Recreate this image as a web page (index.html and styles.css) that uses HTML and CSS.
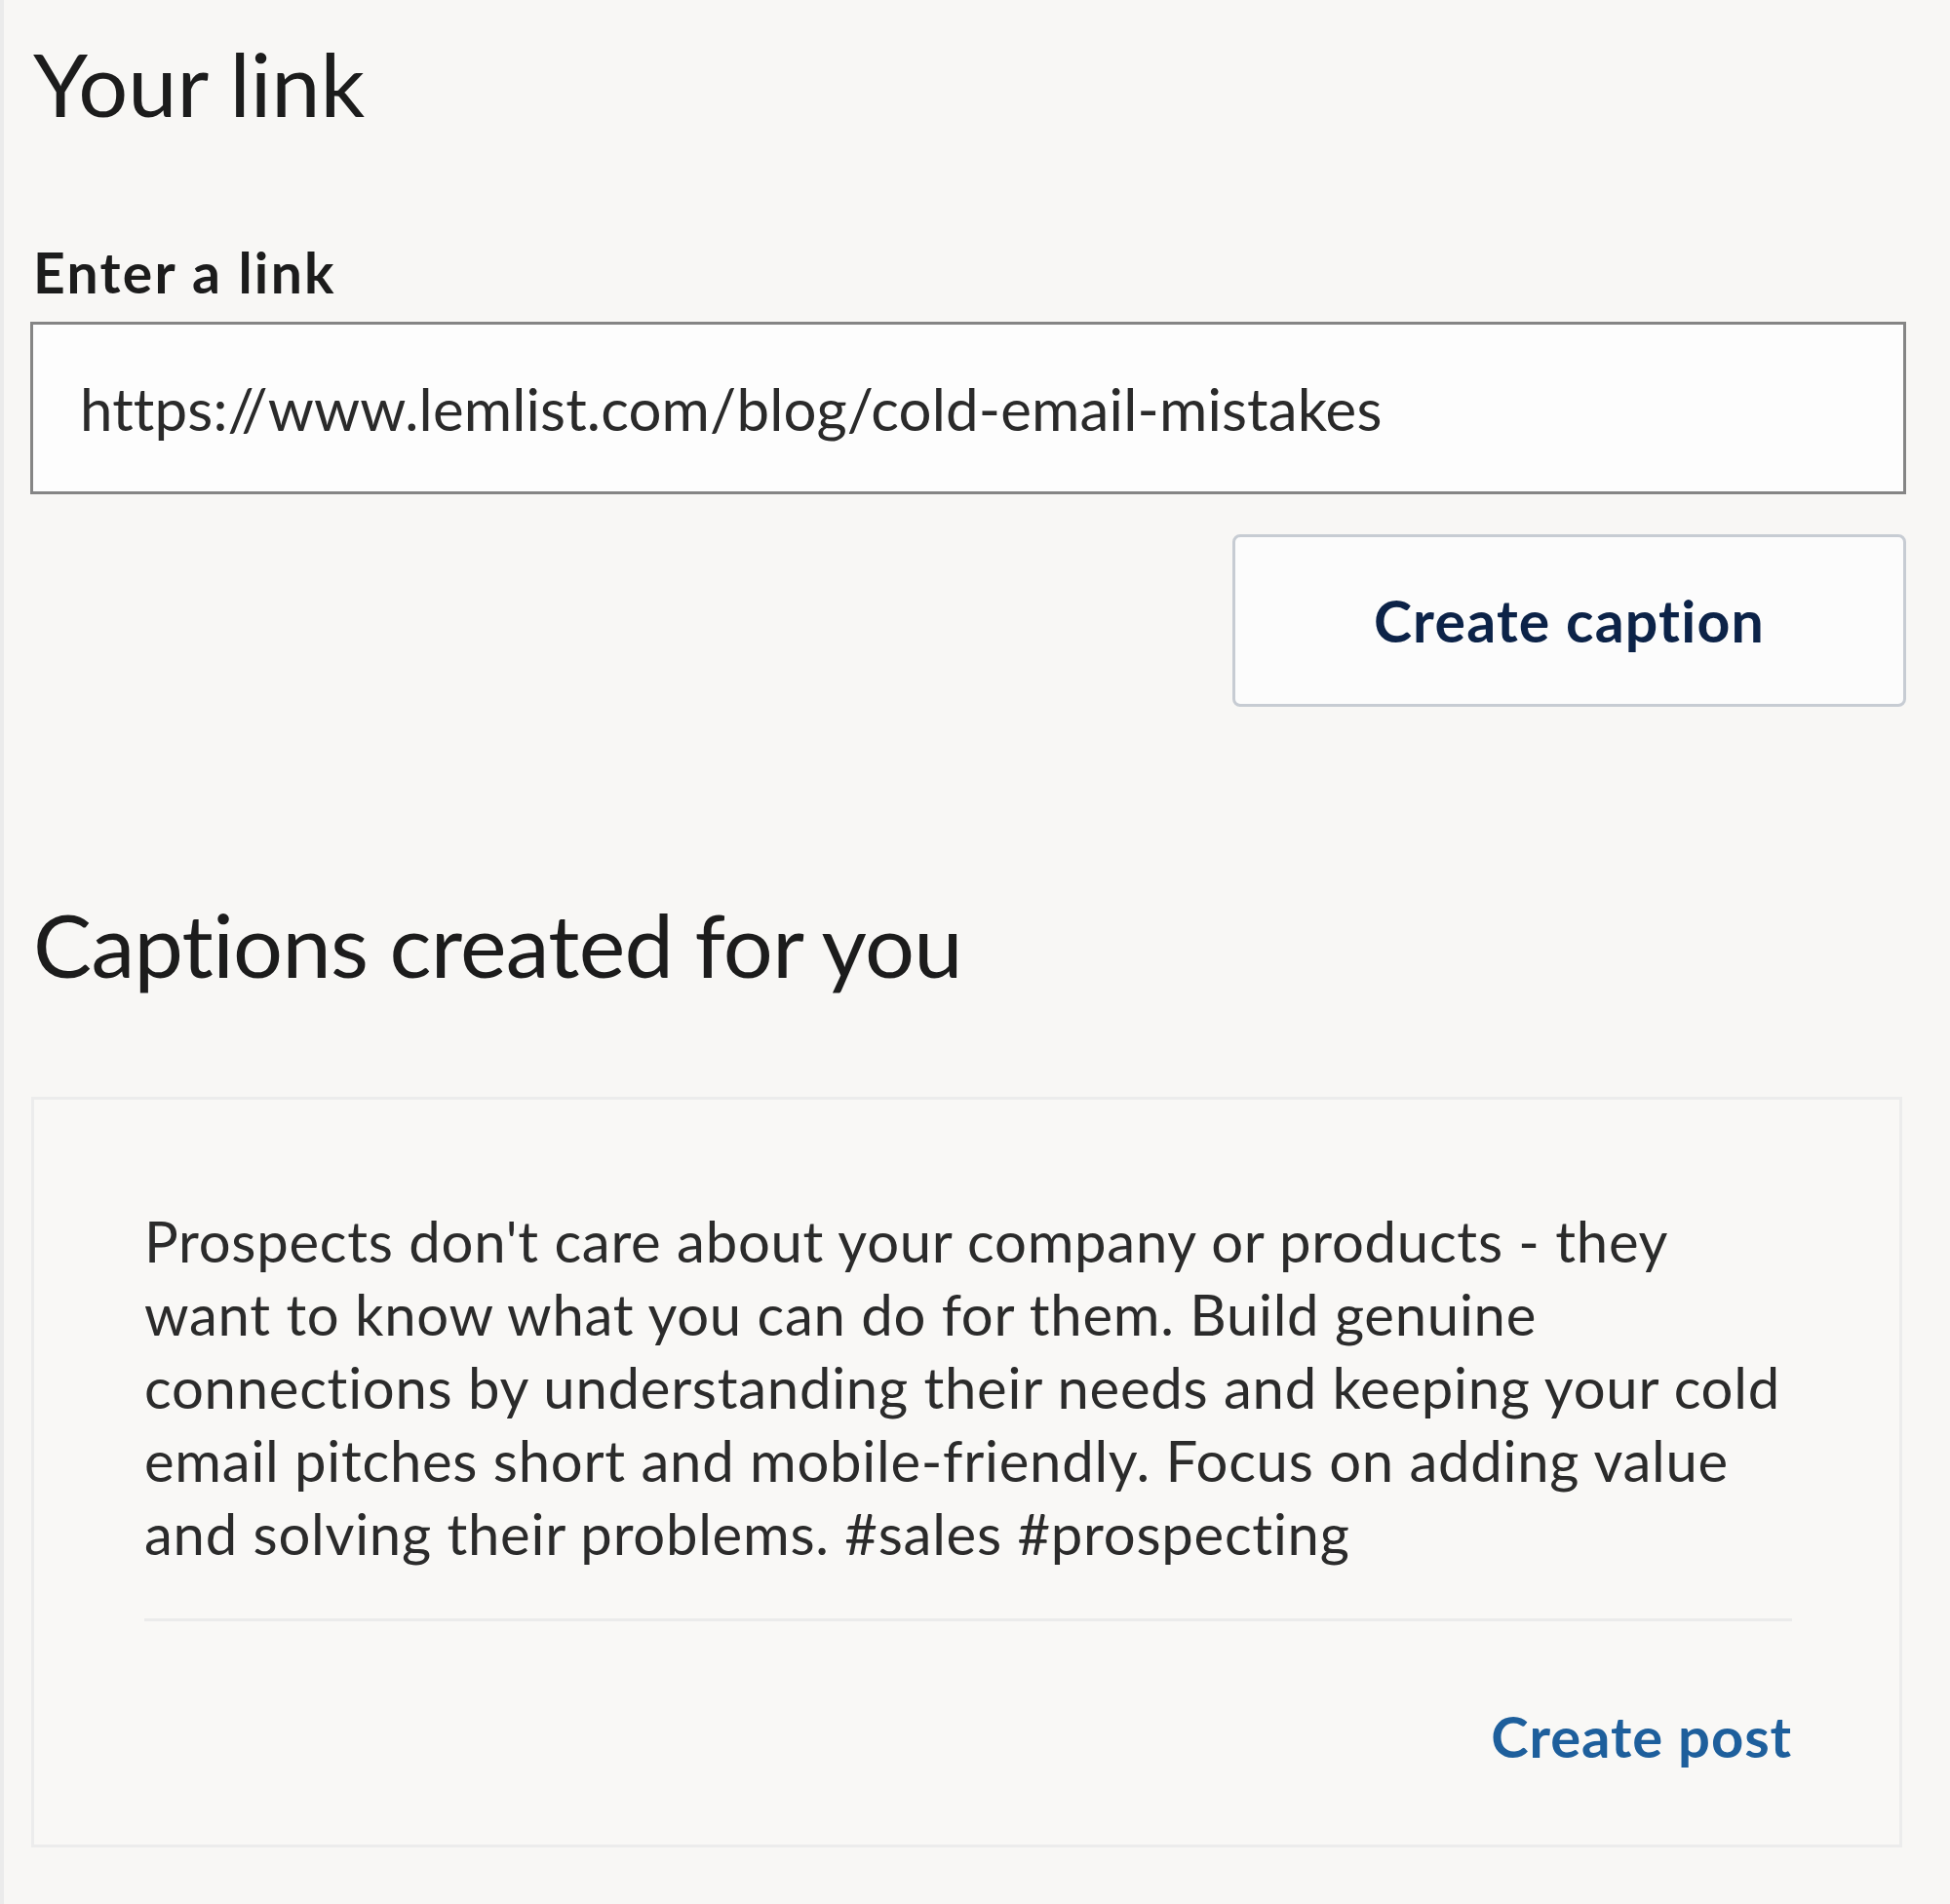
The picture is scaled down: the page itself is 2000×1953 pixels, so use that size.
FILE: index.html
```html
<!DOCTYPE html>
<html lang="en">
<head>
<meta charset="utf-8">
<title>Your link</title>
<link rel="stylesheet" href="styles.css">
</head>
<body>
<main class="page">
  <section class="link-section">
    <h2 class="heading">Your link</h2>
    <label class="field-label">Enter a link</label>
    <div class="text-input">https://www.lemlist.com/blog/cold-email-mistakes</div>
    <div class="actions">
      <button class="btn-secondary" type="button">Create caption</button>
    </div>
  </section>
  <section class="captions-section">
    <h2 class="heading heading-captions">Captions created for you</h2>
    <article class="caption-card">
      <p class="caption-text">Prospects don't care about your company or products - they<br>want to know what you can do for them. Build genuine<br>connections by understanding their needs and keeping your cold<br>email pitches short and mobile-friendly. Focus on adding value<br>and solving their problems. #sales #prospecting</p>
      <hr class="divider">
      <div class="card-actions">
        <a class="link-action" href="#">Create post</a>
      </div>
    </article>
  </section>
</main>
</body>
</html>
```

FILE: styles.css
```css
html, body {
  margin: 0;
  padding: 0;
  background: #f8f7f5;
}

body {
  font-family: Lato, "Open Sans", "Noto Sans", sans-serif;
  font-variant-ligatures: none;
  color: #1a1a1a;
  min-height: 1953px;
}

.page {
  min-height: 1953px;
  box-sizing: border-box;
  border-left: 4px solid #ebebeb;
  padding: 31px 45px 0 27px;
}

.heading {
  margin: 0;
  font-size: 90px;
  line-height: 108px;
  font-weight: 400;
  color: #1c1c1c;
  padding-left: 3px;
}

.heading-captions {
  letter-spacing: -0.7px;
}

.field-label {
  display: block;
  margin-top: 108px;
  font-size: 57px;
  line-height: 64px;
  font-weight: 700;
  letter-spacing: 2.3px;
  color: #1c1c1c;
  padding-left: 3px;
}

.text-input {
  margin-top: 19px;
  height: 177px;
  box-sizing: border-box;
  border: 3px solid #858585;
  background: #fdfdfd;
  display: flex;
  align-items: center;
  padding: 0 48px;
  font-size: 60px;
  line-height: 72px;
  letter-spacing: 0.15px;
  color: #2a2a2a;
  white-space: nowrap;
}

.actions {
  display: flex;
  justify-content: flex-end;
  margin-top: 41px;
}

.btn-secondary {
  width: 691px;
  height: 177px;
  box-sizing: border-box;
  border: 3px solid #c7ccd3;
  border-radius: 8px;
  background: #fcfcfc;
  font-family: inherit;
  font-variant-ligatures: none;
  font-size: 59px;
  letter-spacing: 1.2px;
  font-weight: 700;
  color: #0c2348;
  cursor: pointer;
}

.captions-section {
  margin-top: 189px;
}

.caption-card {
  margin-top: 103px;
  margin-right: 4px;
  margin-left: 1px;
  border: 3px solid #ececec;
  background: #f9f8f6;
  padding: 107px 110px 78px 113px;
}

.caption-text {
  margin: 0;
  font-size: 58px;
  line-height: 75px;
  letter-spacing: 0.75px;
  color: #2b2b2b;
  white-space: nowrap;
}

.divider {
  margin: 50px 0 0 0;
  border: 0;
  height: 3px;
  background: #ebebeb;
}

.card-actions {
  display: flex;
  justify-content: flex-end;
  margin-top: 84px;
}

.link-action {
  font-size: 58px;
  line-height: 67px;
  letter-spacing: 0.9px;
  font-weight: 700;
  color: #1e5f9c;
  text-decoration: none;
}
```
